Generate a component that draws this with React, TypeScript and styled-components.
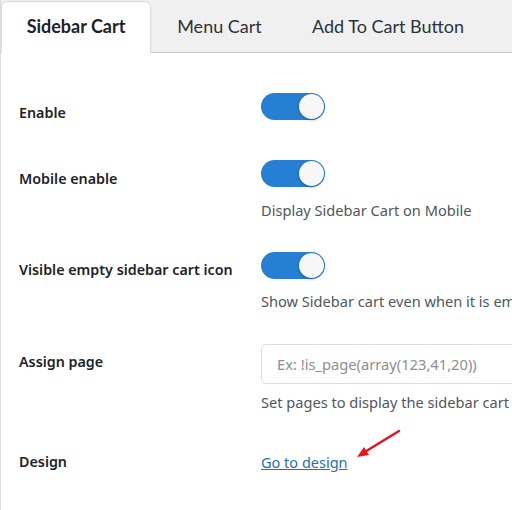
import React from "react";
import styled, { createGlobalStyle } from "styled-components";

const Global = createGlobalStyle`
  html, body { margin: 0; padding: 0; background: #fff; overflow: hidden; }
  body { font-family: "Noto Sans", "Open Sans", sans-serif; }
`;

const Page = styled.div`
  width: 512px;
  height: 510px;
  border-left: 1px solid #dcdcde;
  box-sizing: border-box;
  background: #fff;
  overflow: hidden;
`;

const TabBar = styled.nav`
  display: flex;
  align-items: flex-end;
  height: 53px;
  box-sizing: border-box;
  background: #f0f0f1;
  border-bottom: 1px solid #c3c4c7;
`;

const Tab = styled.div<{ $active?: boolean; $width: number }>`
  width: ${(p) => p.$width}px;
  box-sizing: border-box;
  display: flex;
  align-items: center;
  justify-content: center;
  padding-bottom: 4px;
  font-family: Lato, "Noto Sans", sans-serif;
  font-size: 18px;
  font-weight: ${(p) => (p.$active ? 700 : 400)};
  color: ${(p) => (p.$active ? "#1d2327" : "#2c3338")};
  background: ${(p) => (p.$active ? "#fff" : "transparent")};
  border: ${(p) => (p.$active ? "1px solid #dcdcde" : "none")};
  border-bottom: none;
  border-radius: 6px 6px 0 0;
  margin-bottom: -1px;
  height: ${(p) => (p.$active ? 52 : 51)}px;
`;

const Form = styled.div`
  display: flex;
  flex-direction: column;
`;

const Row = styled.div<{ $pt: number; $pb: number }>`
  display: grid;
  grid-template-columns: 242px 1fr;
  padding: ${(p) => p.$pt}px 0 ${(p) => p.$pb}px 18px;
  position: relative;
`;

const Label = styled.div<{ $pt: number }>`
  padding-top: ${(p) => p.$pt}px;
  font-size: 14.3px;
  line-height: 20px;
  font-weight: 600;
  color: #1d2327;
  white-space: nowrap;
`;

const Field = styled.div`
  display: flex;
  flex-direction: column;
  align-items: flex-start;
  min-width: 0;
`;

const Toggle = styled.div`
  width: 64px;
  height: 27px;
  border-radius: 14px;
  background: #2580d3;
  position: relative;
  flex: none;
`;

const Knob = styled.span`
  position: absolute;
  top: 1px;
  right: 1px;
  width: 25px;
  height: 25px;
  border-radius: 50%;
  background: #f7f7f7;
  box-shadow: 0 1px 3px rgba(0, 0, 0, 0.35);
`;

const Desc = styled.div<{ $mt: number }>`
  margin-top: ${(p) => p.$mt}px;
  font-size: 14.6px;
  line-height: 20px;
  color: #50575e;
  white-space: nowrap;
`;

const Input = styled.input`
  width: 320px;
  height: 40px;
  box-sizing: border-box;
  border: 1px solid #dcdcde;
  border-radius: 5px;
  padding: 0 15px;
  font-family: "Noto Sans", sans-serif;
  font-size: 14.7px;
  color: #2c3338;
  outline: none;
  &::placeholder { color: #8c8f94; }
`;

const Link = styled.a`
  font-size: 14.5px;
  line-height: 20px;
  color: #2271b1;
  text-decoration: underline;
`;

const Arrow = styled.svg`
  position: absolute;
  left: 350px;
  top: -6px;
  pointer-events: none;
`;

const Switch = () => (
  <Toggle>
    <Knob />
  </Toggle>
);

export default function App() {
  return (
    <Page>
      <Global />
      <TabBar>
        <Tab $active $width={150}>Sidebar Cart</Tab>
        <Tab $width={137}>Menu Cart</Tab>
        <Tab $width={200}>Add To Cart Button</Tab>
      </TabBar>
      <Form>
        <Row $pt={40} $pb={20}>
          <Label $pt={10}>Enable</Label>
          <Field>
            <Switch />
          </Field>
        </Row>
        <Row $pt={17} $pb={16}>
          <Label $pt={9}>Mobile enable</Label>
          <Field>
            <Switch />
            <Desc $mt={13}>Display Sidebar Cart on Mobile</Desc>
          </Field>
        </Row>
        <Row $pt={16} $pb={16}>
          <Label $pt={8}>Visible empty sidebar cart icon</Label>
          <Field>
            <Switch />
            <Desc $mt={12}>Show Sidebar cart even when it is empty</Desc>
          </Field>
        </Row>
        <Row $pt={17} $pb={20}>
          <Label $pt={8}>Assign page</Label>
          <Field>
            <Input placeholder="Ex: !is_page(array(123,41,20))" />
            <Desc $mt={8}>Set pages to display the sidebar cart</Desc>
          </Field>
        </Row>
        <Row $pt={20} $pb={20}>
          <Label $pt={0}>Design</Label>
          <Field>
            <Link href="#">Go to design</Link>
          </Field>
          <Arrow width="60" height="40" viewBox="0 0 60 40">
            <line x1="48" y1="5" x2="12" y2="27" stroke="#e8141b" strokeWidth="2.5" strokeLinecap="round" />
            <polygon points="6,31 13,21 18,29" fill="#e8141b" />
          </Arrow>
        </Row>
      </Form>
    </Page>
  );
}
